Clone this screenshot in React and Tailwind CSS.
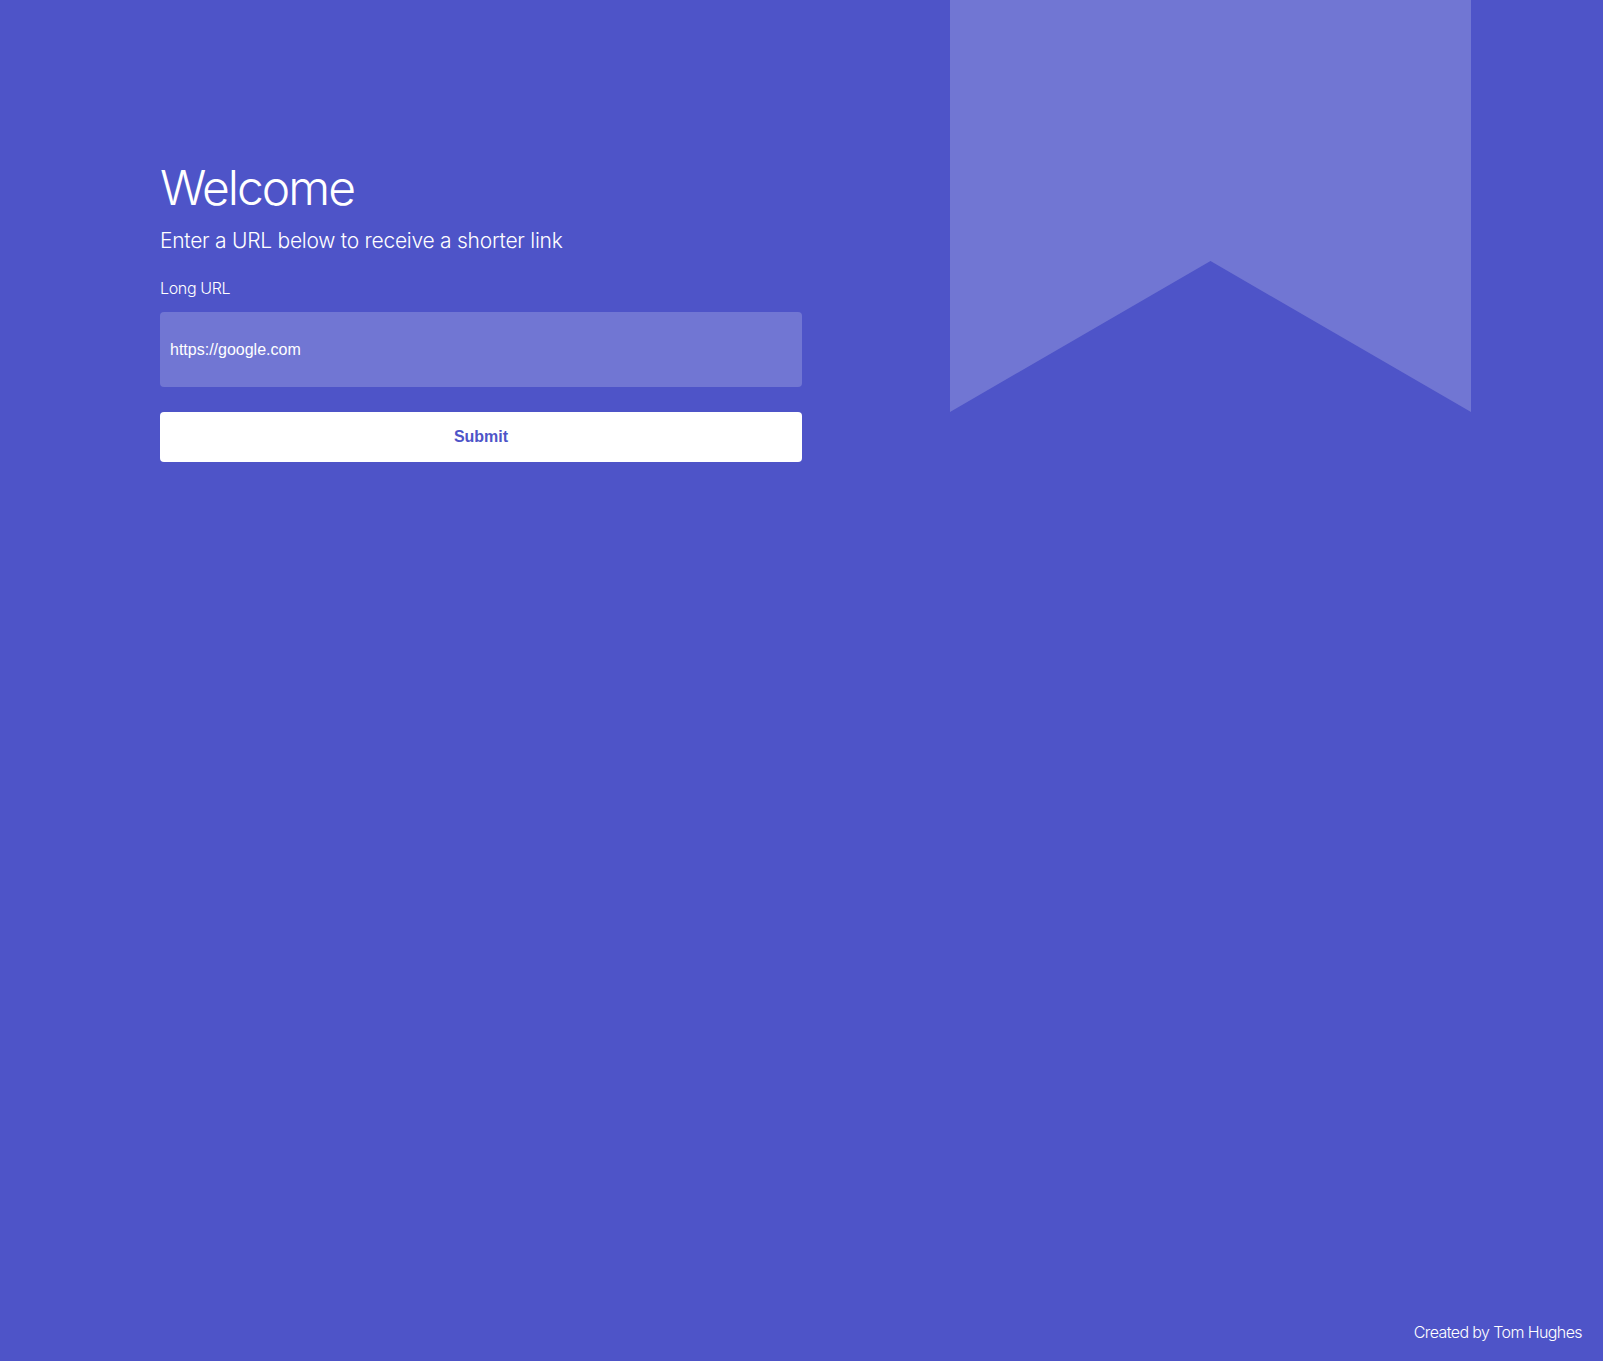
import React, { useState } from 'react';

const Bookmark = () => (
  <svg width="521" height="412" viewBox="0 0 521 412" className="ml-[148px] shrink-0">
    <polygon points="0,0 521,0 521,412 260.5,261 0,412" fill="#ffffff" fillOpacity="0.2" />
  </svg>
);

const App = () => {
  const [url, setUrl] = useState('https://google.com');

  return (
    <div className="min-h-[1361px] bg-[#4e54c8] flex flex-col text-white font-['Helvetica_Neue',Inter,'Liberation_Sans',sans-serif]">
      <div className="flex flex-1">
        <main className="ml-[160px] w-[642px] shrink-0 pt-[164px]">
          <h1 className="text-[48px] leading-none font-light tracking-[-2px]">Welcome</h1>
          <p className="mt-[18px] text-[21px] leading-none font-light tracking-[-0.25px]">Enter a URL below to receive a shorter link</p>

          <label className="block mt-[29px] text-[16px] leading-none font-light tracking-[-0.35px]">Long URL</label>
          <input
            value={url}
            onChange={(e) => setUrl(e.target.value)}
            className="mt-[16px] block w-full h-[75px] px-[10px] rounded-[4px] bg-white/20 text-white text-[16px] font-['Liberation_Sans',Arial,sans-serif] outline-none"
          />

          <button className="mt-[25px] block w-full h-[50px] rounded-[4px] bg-white text-[#4e54c8] text-[16px] font-bold font-['Liberation_Sans',Arial,sans-serif]">
            Submit
          </button>
        </main>
        <Bookmark />
      </div>

      <footer className="pr-[21px] pb-[21px] text-right text-[16px] leading-none font-light tracking-[-0.6px]">
        Created by Tom Hughes
      </footer>
    </div>
  );
};

export default App;
